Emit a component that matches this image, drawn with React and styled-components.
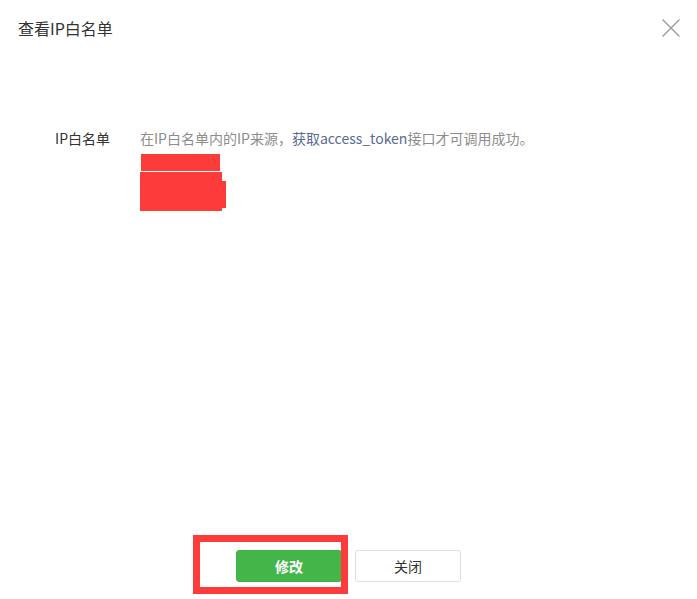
import styled, { createGlobalStyle } from "styled-components";

const GlobalStyle = createGlobalStyle`
    html, body {
        margin: 0;
        padding: 0;
        background: #fff;
    }
    body {
        font-family: "Noto Sans CJK SC", "Noto Sans", sans-serif;
        color: #333;
    }
`;

const Dialog = styled.div`
    width: 697px;
    height: 599px;
    display: flex;
    flex-direction: column;
    background: #fff;
`;

const Header = styled.div`
    height: 56px;
    display: flex;
    align-items: center;
    justify-content: space-between;
    padding: 0 17px 0 18px;
`;

const Title = styled.h3`
    margin: 0;
    font-size: 16px;
    font-weight: 400;
    color: #333;
`;

const CloseButton = styled.button`
    width: 18px;
    height: 18px;
    padding: 0;
    border: none;
    background: none;
    cursor: pointer;
    display: flex;
`;

const Body = styled.div`
    flex: 1;
    padding-top: 72px;
`;

const FormRow = styled.div`
    display: grid;
    grid-template-columns: 110px 1fr;
    column-gap: 30px;
    font-size: 14px;
    line-height: 20px;
`;

const Label = styled.div`
    text-align: right;
    color: #333;
`;

const Field = styled.div`
    display: flex;
    flex-direction: column;
    align-items: flex-start;
`;

const Tip = styled.p`
    margin: 0;
    color: #8d8d8d;
    white-space: nowrap;
`;

const Link = styled.a`
    color: #576b95;
    text-decoration: none;
`;

const Redaction = styled.div`
    background: #fd3b3b;
    width: ${(p) => p.$w}px;
    height: ${(p) => p.$h}px;
    margin-left: ${(p) => p.$left || 0}px;
    margin-top: ${(p) => p.$top || 0}px;
    clip-path: ${(p) => p.$clip || "none"};
`;

const Footer = styled.div`
    display: flex;
    justify-content: center;
    gap: 13px;
    padding-bottom: 17px;
`;

const ButtonWrap = styled.div`
    position: relative;
`;

const Button = styled.button`
    width: 106px;
    height: 32px;
    border-radius: 3px;
    font-family: inherit;
    font-size: 14px;
    cursor: pointer;
    border: 1px solid ${(p) => (p.$primary ? "#44b549" : "#e0e0e0")};
    background: ${(p) => (p.$primary ? "#44b549" : "#fff")};
    color: ${(p) => (p.$primary ? "#fff" : "#333")};
    font-weight: ${(p) => (p.$primary ? 700 : 400)};
`;

const Highlight = styled.div`
    position: absolute;
    top: -15px;
    left: -43px;
    right: -6px;
    bottom: -12px;
    border: 7px solid #fd3b3b;
    pointer-events: none;
`;

function App() {
    return (
        <>
            <GlobalStyle />
            <Dialog>
                <Header>
                    <Title>查看IP白名单</Title>
                    <CloseButton aria-label="关闭">
                        <svg width="18" height="18" viewBox="0 0 18 18">
                            <path
                                d="M0.5 0.5 L17.5 17.5 M17.5 0.5 L0.5 17.5"
                                stroke="#9a9a9a"
                                strokeWidth="1.4"
                                fill="none"
                            />
                        </svg>
                    </CloseButton>
                </Header>
                <Body>
                    <FormRow>
                        <Label>IP白名单</Label>
                        <Field>
                            <Tip>
                                在IP白名单内的IP来源，
                                <Link href="#">获取access_token</Link>
                                接口才可调用成功。
                            </Tip>
                            <Redaction $w={79} $h={17} $left={1} $top={6} />
                            <Redaction
                                $w={86}
                                $h={39}
                                $top={1}
                                $clip="polygon(0 0, 82px 0, 82px 9px, 86px 9px, 86px 36px, 82px 36px, 82px 100%, 0 100%)"
                            />
                        </Field>
                    </FormRow>
                </Body>
                <Footer>
                    <ButtonWrap>
                        <Button $primary>修改</Button>
                        <Highlight />
                    </ButtonWrap>
                    <Button>关闭</Button>
                </Footer>
            </Dialog>
        </>
    );
}

export default App;
